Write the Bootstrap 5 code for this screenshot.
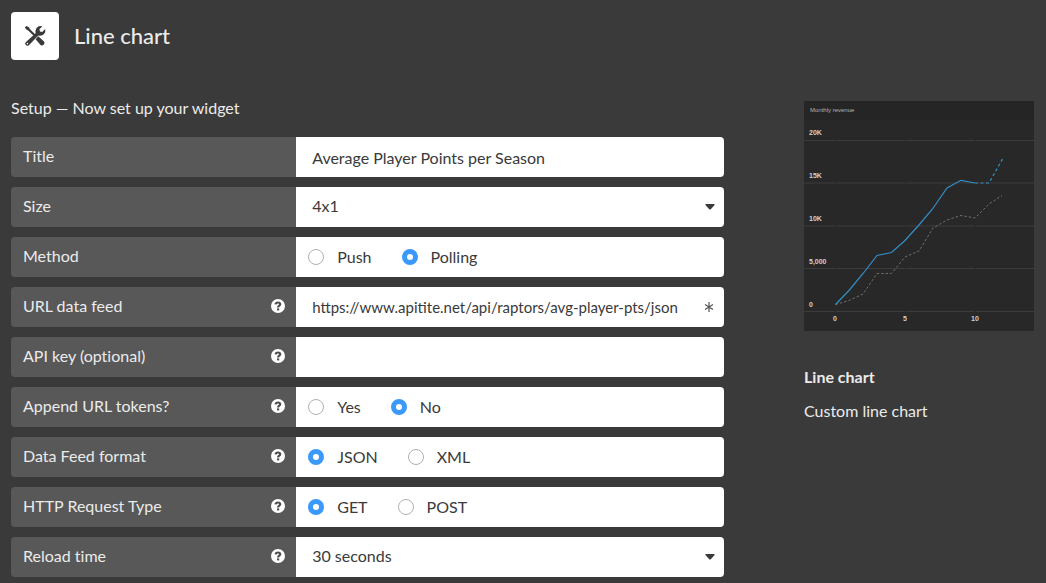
<!DOCTYPE html>
<html lang="en">
<head>
<meta charset="utf-8">
<meta name="viewport" content="width=device-width, initial-scale=1">
<title>Line chart – widget setup</title>
<link href="https://cdn.jsdelivr.net/npm/bootstrap@5.3.0/dist/css/bootstrap.min.css" rel="stylesheet">
<style>
  body { background: #3a3a3a; color: #ebebeb; font: 16px/24px Lato, "Liberation Sans", sans-serif; font-variant-ligatures: none; }
  .page { padding: 12px 12px 6px 11px; }
  .tool-tile { width: 48px; height: 48px; border-radius: 4px; background: #fff; }
  .page-head { gap: 15px; margin-bottom: 36px; }
  .page-title { font-size: 22px; line-height: 28px; font-weight: 500; padding-bottom: 1px; }
  .page-body { gap: 80px; }
  .preview { width: 230px; margin-top: 5px; }
  .preview svg { background: #282828; }
  .intro { margin-bottom: 17px; }
  .preview-name { font-size: 16px; line-height: 24px; margin: 34px 0 10px; }
  .field-rows { display: grid; gap: 10px; }
  .field-row { display: grid; grid-template-columns: 2fr 3fr; min-height: 40px; border-radius: 4px; overflow: hidden; color: #3a3a3a; }
  .field-name { background: #585858; color: #ebebeb; padding: 0 11px 2px 12px; }
  .field-row .form-control, .field-row .form-select { border: 0; border-radius: 0; background-color: #fff; color: #3a3a3a; font-size: 16px; line-height: 24px; padding: 8px 16px; height: 40px; min-width: 0; box-shadow: none; }
  .field-row .form-select { padding-top: 7px; padding-bottom: 9px; padding-right: 36px; background-image: url("data:image/svg+xml,%3Csvg xmlns='http://www.w3.org/2000/svg' viewBox='0 0 10 6'%3E%3Cpath fill='%233a3a3a' d='M1 0h8q1 0 .6 1L6 5Q5 6 4 5L.4 1Q0 0 1 0z'/%3E%3C/svg%3E"); background-size: 10px 6px; background-position: right 9px center; }
  .field-row .form-control[type="url"] { font-size: 15px; padding-right: 0; }
  .help { width: 14px; height: 14px; margin-bottom: 1px; }
  .options { background: #fff; padding: 0 12px; gap: 30px; }
  .option { gap: 13px; }
  .option .form-check-input { width: 16px; height: 16px; margin: 0; border: 1px solid #b0b0b0; background-color: #fff; box-shadow: none; }
  .option .form-check-input:checked { border: 5px solid #3b99fc; background: #fff; }
  .with-mark { background: #fff; }
  .required-mark { width: 30px; }
</style>
</head>
<body>
<div class="page container-fluid">
  <header class="page-head d-flex align-items-center">
    <div class="tool-tile d-flex align-items-center justify-content-center">
      <svg width="22" height="22" viewBox="0 0 22 22" aria-hidden="true">
        <g fill="#3a3a3a">
          <path d="M.8 2.400 2.400 .900 5 2.300 5.800 4 11.400 9.500 9.900 11 4.200 5.400 2.600 4.800z"/>
          <path d="M14.200 11.300 19.800 16.200Q21.200 17.600 20.100 19.300T16.800 20.200L11.600 14.200z"/>
          <path d="M1.700 17.200 11.600 8.200Q10.900 4.600 13.300 2.300 15.500.300 18.400 1.300L15.400 4.300 16 6.600 18.200 7 21.200 4.100Q22 7.200 19.900 9.200 17.600 11.200 14.300 10.400L4.900 20.200Q3.300 21.400 1.800 20T1.700 17.200z"/>
        </g>
        <circle cx="3.400" cy="18.600" r=".8" fill="#fff"/>
      </svg>
    </div>
    <h1 class="page-title m-0">Line chart</h1>
  </header>

  <div class="page-body d-flex align-items-start">
    <main class="flex-grow-1">
      <p class="intro">Setup — Now set up your widget</p>
      <form class="field-rows">
        <div class="field-row">
          <div class="field-name d-flex align-items-center"><label for="title">Title</label></div>
          <input class="form-control" id="title" type="text" value="Average Player Points per Season">
        </div>
        <div class="field-row">
          <div class="field-name d-flex align-items-center"><label for="size">Size</label></div>
          <select class="form-select" id="size"><option>4x1</option></select>
        </div>
        <div class="field-row" role="radiogroup" aria-labelledby="method">
          <div class="field-name d-flex align-items-center"><span id="method">Method</span></div>
          <div class="options d-flex align-items-center">
            <label class="option d-flex align-items-center"><input class="form-check-input" type="radio" name="method">Push</label>
            <label class="option d-flex align-items-center"><input class="form-check-input" type="radio" name="method" checked>Polling</label>
          </div>
        </div>
        <div class="field-row">
          <div class="field-name d-flex align-items-center justify-content-between"><label for="url">URL data feed</label><svg class="help" viewBox="0 0 14 14"><use href="#help"/></svg></div>
          <div class="with-mark d-flex align-items-center">
            <input class="form-control" id="url" type="url" value="https://www.apitite.net/api/raptors/avg-player-pts/json" required>
            <svg class="required-mark flex-shrink-0" height="10" viewBox="0 0 30 10" aria-hidden="true"><path d="M15 0v10M11 2.500l8 5M19 2.500l-8 5" stroke="#555" stroke-width="1.200"/></svg>
          </div>
        </div>
        <div class="field-row">
          <div class="field-name d-flex align-items-center justify-content-between"><label for="key">API key (optional)</label><svg class="help" viewBox="0 0 14 14"><use href="#help"/></svg></div>
          <input class="form-control" id="key" type="text">
        </div>
        <div class="field-row" role="radiogroup" aria-labelledby="tokens">
          <div class="field-name d-flex align-items-center justify-content-between"><span id="tokens">Append URL tokens?</span><svg class="help" viewBox="0 0 14 14"><use href="#help"/></svg></div>
          <div class="options d-flex align-items-center">
            <label class="option d-flex align-items-center"><input class="form-check-input" type="radio" name="tokens">Yes</label>
            <label class="option d-flex align-items-center"><input class="form-check-input" type="radio" name="tokens" checked>No</label>
          </div>
        </div>
        <div class="field-row" role="radiogroup" aria-labelledby="format">
          <div class="field-name d-flex align-items-center justify-content-between"><span id="format">Data Feed format</span><svg class="help" viewBox="0 0 14 14"><use href="#help"/></svg></div>
          <div class="options d-flex align-items-center">
            <label class="option d-flex align-items-center"><input class="form-check-input" type="radio" name="format" checked>JSON</label>
            <label class="option d-flex align-items-center"><input class="form-check-input" type="radio" name="format">XML</label>
          </div>
        </div>
        <div class="field-row" role="radiogroup" aria-labelledby="request">
          <div class="field-name d-flex align-items-center justify-content-between"><span id="request">HTTP Request Type</span><svg class="help" viewBox="0 0 14 14"><use href="#help"/></svg></div>
          <div class="options d-flex align-items-center">
            <label class="option d-flex align-items-center"><input class="form-check-input" type="radio" name="request" checked>GET</label>
            <label class="option d-flex align-items-center"><input class="form-check-input" type="radio" name="request">POST</label>
          </div>
        </div>
        <div class="field-row">
          <div class="field-name d-flex align-items-center justify-content-between"><label for="reload">Reload time</label><svg class="help" viewBox="0 0 14 14"><use href="#help"/></svg></div>
          <select class="form-select" id="reload"><option>30 seconds</option></select>
        </div>
      </form>
    </main>

    <aside class="preview flex-shrink-0">
      <svg class="d-block w-100" viewBox="0 0 230 230" role="img" aria-label="Monthly revenue" font-family="Liberation Sans, Arial, sans-serif">
        <rect width="230" height="19" fill="#252525"/>
        <path d="M0 39.500h230M0 82h230M0 125h230M0 167.500h230M0 210.500h230" stroke="#3c3c3c" stroke-width="1.200"/>
        <path d="M31.500 38v174M101.500 38v174M171.500 38v174" stroke="#282828"/>
        <g fill="none">
          <path d="M31.500 203.500 45 199.500 59 193 73 172.500H87.500L101 156 115 150 129 127 143 119 157 114.500 171 117 185 103 198 94.500" stroke="#707070" stroke-dasharray="2.500 2"/>
          <path d="M31.500 203.500 45 189.500 59.500 172 73 154.500 87.500 151.500 101 139.500 114.500 124.500 128.500 108 143 87 157 79.300 171 82" stroke="#348fc6" stroke-width="1.200"/>
          <path d="M171 82H185L198.500 58" stroke="#348fc6" stroke-width="1.200" stroke-dasharray="3 2.500"/>
        </g>
        <text x="6" y="11" font-size="6" fill="#b4b4b4">Monthly revenue</text>
        <g font-size="7" font-weight="bold" fill="#d0d0d0">
          <text x="5" y="34">20K</text>
          <text x="5" y="77">15K</text>
          <text x="5" y="120">10K</text>
          <text x="5" y="163">5,000</text>
          <text x="5" y="206">0</text>
          <g text-anchor="middle">
            <text x="31" y="220">0</text>
            <text x="101" y="220">5</text>
            <text x="171" y="220">10</text>
          </g>
        </g>
      </svg>
      <h2 class="preview-name fw-bold">Line chart</h2>
      <p class="mb-0">Custom line chart</p>
    </aside>
  </div>
</div>
<svg width="0" height="0" class="position-absolute" aria-hidden="true">
  <symbol id="help" viewBox="0 0 14 14">
    <circle cx="7" cy="7" r="7" fill="#fff"/>
    <path d="M4.600 5.400Q4.900 3.500 7 3.500T9.200 5.300C9.200 6.700 7.100 6.600 7.100 8.400" fill="none" stroke="#4c4c4c" stroke-width="2.200"/>
    <rect x="6" y="9.400" width="2.200" height="2" fill="#4c4c4c"/>
  </symbol>
</svg>
<script src="https://cdn.jsdelivr.net/npm/bootstrap@5.3.0/dist/js/bootstrap.bundle.min.js"></script>
</body>
</html>
